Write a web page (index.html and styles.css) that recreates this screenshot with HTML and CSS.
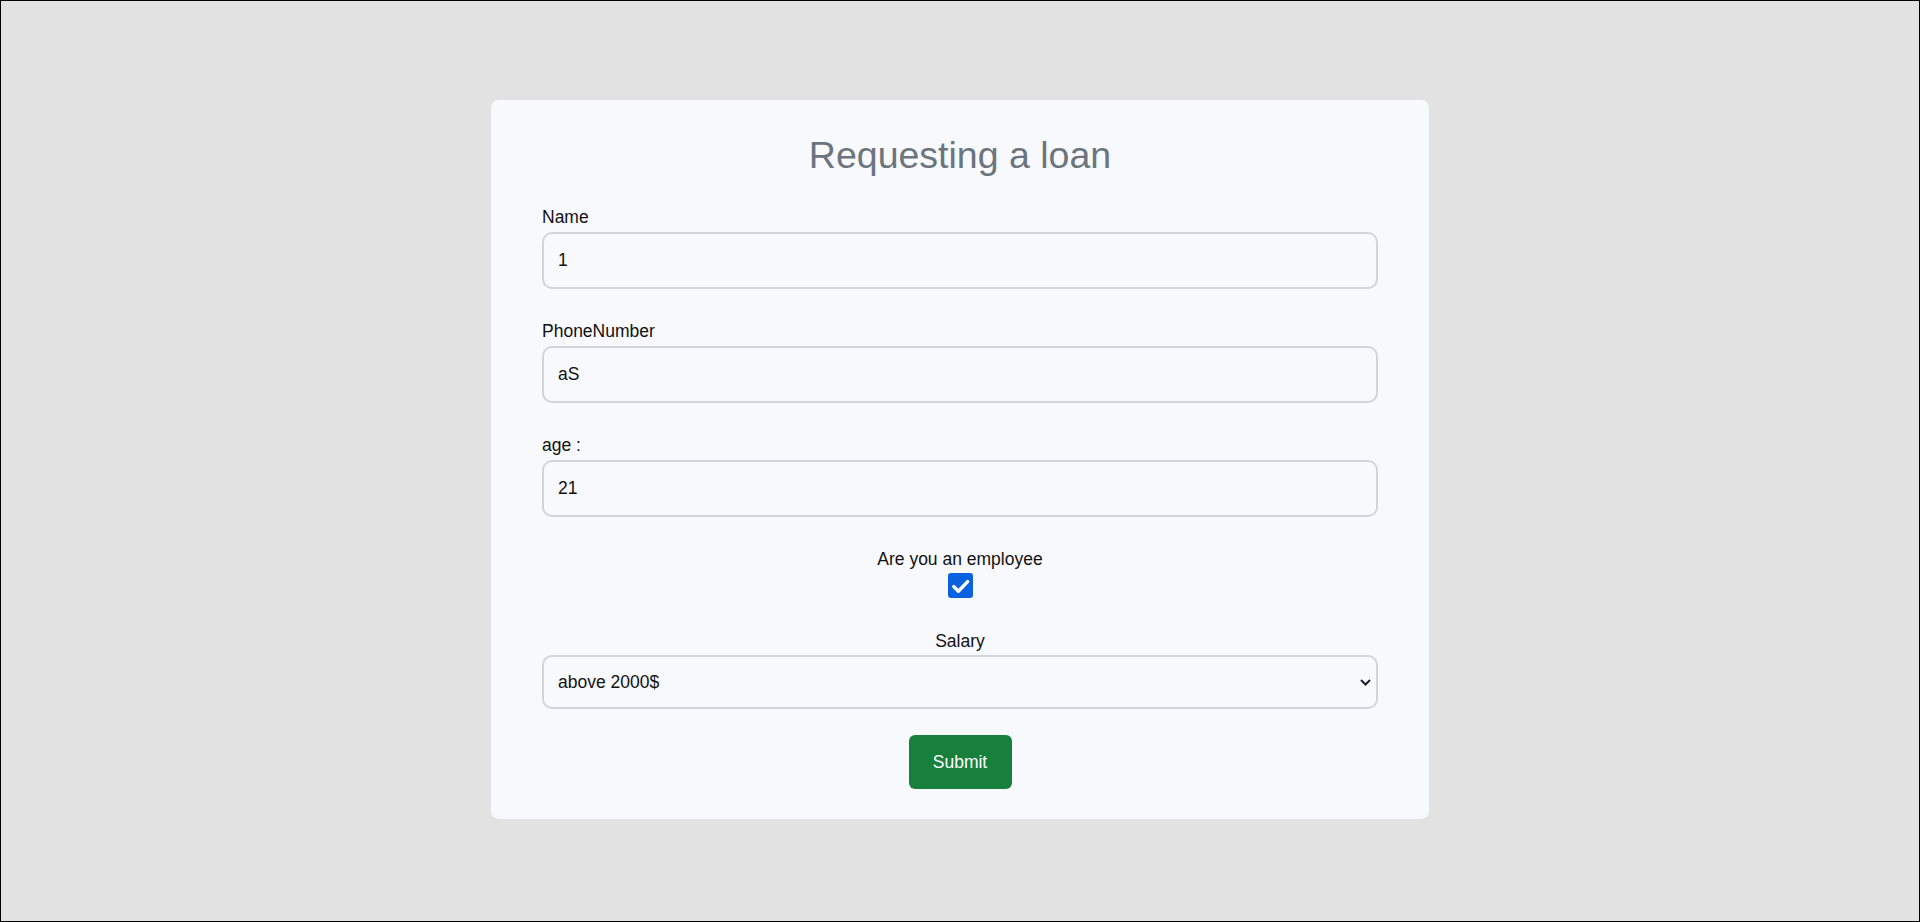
FILE: index.html
```html
<!DOCTYPE html>
<html lang="en">
<head>
<meta charset="utf-8">
<title>Requesting a loan</title>
<link rel="stylesheet" href="styles.css">
</head>
<body>
<main class="page">
  <form class="card">
    <h1 class="title">Requesting a loan</h1>
    <div class="field">
      <label class="label" for="name">Name</label>
      <input class="input" id="name" type="text" value="1">
    </div>
    <div class="field">
      <label class="label" for="phone">PhoneNumber</label>
      <input class="input" id="phone" type="text" value="aS">
    </div>
    <div class="field">
      <label class="label" for="age">age :</label>
      <input class="input" id="age" type="text" value="21">
    </div>
    <div class="field field-center">
      <label class="label" for="emp">Are you an employee</label>
      <span class="check" id="emp">
        <svg width="25" height="25" viewBox="0 0 25 25"><path d="M5.8 13.6 L10.4 18.2 L19.6 8.6" fill="none" stroke="#fff" stroke-width="3.4" stroke-linecap="round" stroke-linejoin="round"/></svg>
      </span>
    </div>
    <div class="field field-center field-salary">
      <label class="label" for="salary">Salary</label>
      <div class="select-wrap">
        <select class="select" id="salary">
          <option>above 2000$</option>
        </select>
        <svg class="chevron" width="11" height="7" viewBox="0 0 11 7"><path d="M1 1 L5.5 5.5 L10 1" fill="none" stroke="#1b1e2b" stroke-width="2"/></svg>
      </div>
    </div>
    <div class="actions">
      <button class="btn" type="button">Submit</button>
    </div>
  </form>
</main>
</body>
</html>
```
FILE: styles.css
```css
* { box-sizing: border-box; }
html, body { margin: 0; padding: 0; }
body {
  font-family: "Liberation Sans", Arial, sans-serif;
  background: #e2e2e2;
}
.page {
  height: 922px;
  border: 1px solid #000;
  padding-bottom: 3px;
  display: flex;
  align-items: center;
  justify-content: center;
}
.card {
  width: 938px;
  background: #f8f9fd;
  border-radius: 8px;
  padding: 34px 51px 30px;
  display: flex;
  flex-direction: column;
}
.title {
  margin: 0 0 30px;
  font-size: 37.5px;
  font-weight: 400;
  line-height: 43px;
  color: #6c757d;
  text-align: center;
}
.field {
  display: flex;
  flex-direction: column;
  margin-bottom: 32px;
}
.field-center { align-items: center; margin-bottom: 33px; }
.field-salary { margin-bottom: 26px; }
.label {
  font-size: 17.5px;
  line-height: 20px;
  color: #111;
  margin-bottom: 5px;
}
.field-center .label { margin-bottom: 4px; }
.input {
  width: 100%;
  height: 57px;
  border: 2px solid #d2d4da;
  border-radius: 10px;
  background: #f8f9fc;
  padding: 0 14px;
  font-family: "Liberation Sans", Arial, sans-serif;
  font-size: 17.5px;
  color: #111;
  outline: none;
}
.check {
  width: 25px;
  height: 25px;
  border-radius: 3px;
  background: #0b62e0;
  display: block;
}
.check svg { display: block; }
.select-wrap {
  position: relative;
  width: 100%;
}
.select {
  width: 100%;
  height: 54px;
  border: 2px solid #d2d4da;
  border-radius: 10px;
  background: #f8f9fc;
  padding: 0 14px;
  font-family: "Liberation Sans", Arial, sans-serif;
  font-size: 17.5px;
  color: #111;
  appearance: none;
  -webkit-appearance: none;
  outline: none;
}
.chevron {
  position: absolute;
  right: 7px;
  top: 24px;
}
.actions {
  display: flex;
  justify-content: center;
}
.btn {
  width: 103px;
  height: 54px;
  border: none;
  border-radius: 6px;
  background: #17803d;
  color: #fff;
  font-family: "Liberation Sans", Arial, sans-serif;
  font-size: 17.5px;
}
```
